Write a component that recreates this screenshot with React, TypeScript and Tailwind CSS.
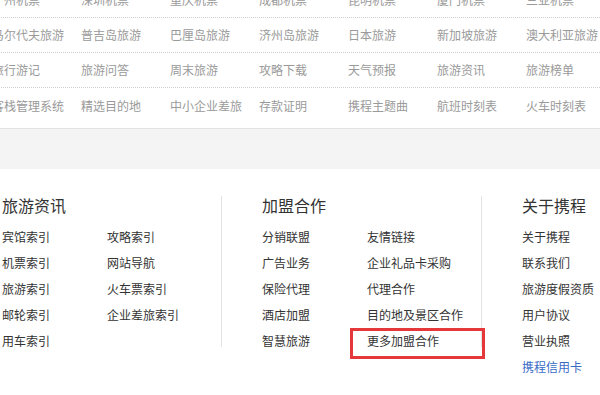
const ROWS = [
  ["广州机票", "深圳机票", "重庆机票", "成都机票", "昆明机票", "厦门机票", "三亚机票"],
  ["马尔代夫旅游", "普吉岛旅游", "巴厘岛旅游", "济州岛旅游", "日本旅游", "新加坡旅游", "澳大利亚旅游"],
  ["旅行游记", "旅游问答", "周末旅游", "攻略下载", "天气预报", "旅游资讯", "旅游榜单"],
  ["客栈管理系统", "精选目的地", "中小企业差旅", "存款证明", "携程主题曲", "航班时刻表", "火车时刻表"],
];

const FONT = "font-['Noto_Sans_CJK_SC','Noto_Sans',sans-serif]";

function LinkGrid({ items }: { items: string[] }) {
  return (
    <div className="mt-[7px] grid grid-cols-[105px_105px]">
      {items.map((t, i) =>
        t === "更多加盟合作" ? (
          <div key={i} className="relative h-[26px] leading-[26px] text-[12px] text-[#333] whitespace-nowrap">
            {t}
            <div className="absolute left-[-17px] top-[0px] w-[135px] h-[31px] border-[3px] border-[#e5383b]" />
          </div>
        ) : (
          <div key={i} className="h-[26px] leading-[26px] text-[12px] text-[#333] whitespace-nowrap">
            {t}
          </div>
        )
      )}
    </div>
  );
}

export default function App() {
  return (
    <div className={`w-[600px] h-[395px] overflow-hidden bg-white ${FONT}`}>
      <div className="-mt-[17px] pb-[5px] border-b border-[#e2e2e2]">
        {ROWS.map((row, r) => (
          <div key={r} className={`flex -ml-[8px] h-[35px] items-center ${r < 3 ? "border-b border-dotted border-[#cfcfcf]" : ""}`}>
            {row.map((t) => (
              <div key={t} className="w-[89px] shrink-0 text-[12px] text-[#9a9a9a] whitespace-nowrap">
                {t}
              </div>
            ))}
          </div>
        ))}
      </div>
      <div className="h-[40px] bg-[#f4f4f4]" />
      <div className="flex pt-[24px]">
        <div className="w-[221px] pl-[2px]">
          <div className="h-[24px] leading-[24px] text-[16px] text-[#333]">旅游资讯</div>
          <LinkGrid items={["宾馆索引", "攻略索引", "机票索引", "网站导航", "旅游索引", "火车票索引", "邮轮索引", "企业差旅索引", "用车索引"]} />
        </div>
        <div className="w-px h-[151px] mt-[3px] bg-[#e3e3e3]" />
        <div className="w-[259px] pl-[40px]">
          <div className="h-[24px] leading-[24px] text-[16px] text-[#333]">加盟合作</div>
          <LinkGrid items={["分销联盟", "友情链接", "广告业务", "企业礼品卡采购", "保险代理", "代理合作", "酒店加盟", "目的地及景区合作", "智慧旅游", "更多加盟合作"]} />
        </div>
        <div className="w-px h-[151px] mt-[3px] bg-[#e3e3e3]" />
        <div className="pl-[40px]">
          <div className="h-[24px] leading-[24px] text-[16px] text-[#333]">关于携程</div>
          <div className="mt-[7px]">
            {["关于携程", "联系我们", "旅游度假资质", "用户协议", "营业执照"].map((t) => (
              <div key={t} className="h-[26px] leading-[26px] text-[12px] text-[#333] whitespace-nowrap">{t}</div>
            ))}
            <div className="h-[26px] leading-[26px] text-[12px] text-[#3a6cc6] whitespace-nowrap">携程信用卡</div>
          </div>
        </div>
      </div>
    </div>
  );
}
